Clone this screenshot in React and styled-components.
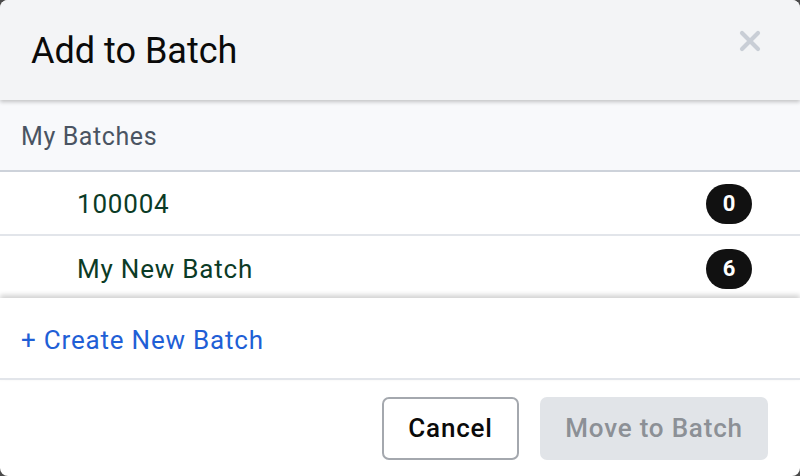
import React from "react";
import styled, { createGlobalStyle } from "styled-components";

const GlobalStyle = createGlobalStyle`
    html, body {
        margin: 0;
        padding: 0;
        background: #4b4b4b;
    }
    body {
        font-family: Roboto, "Liberation Sans", sans-serif;
    }
`;

const Modal = styled.div`
    width: 800px;
    height: 476px;
    background: #ffffff;
    border-radius: 8px;
    overflow: hidden;
    display: flex;
    flex-direction: column;
`;

const Header = styled.div`
    height: 100px;
    box-sizing: border-box;
    padding: 2px 31px 0;
    background: #f3f4f6;
    display: flex;
    align-items: center;
    justify-content: space-between;
    box-shadow: 0 2px 4px rgba(0, 0, 0, 0.22);
    position: relative;
    z-index: 2;
    .title {
        margin: 0;
        font-size: 36px;
        font-weight: 400;
        color: #0a0a0a;
    }
`;

const CloseButton = styled.button`
    border: 0;
    background: none;
    padding: 0;
    margin-right: 8px;
    margin-top: -21px;
    width: 22px;
    height: 22px;
    cursor: pointer;
    svg {
        display: block;
    }
`;

const SectionLabel = styled.div`
    height: 72px;
    box-sizing: border-box;
    padding: 3px 21px 0;
    display: flex;
    align-items: center;
    background: #f8f9fb;
    border-bottom: 2px solid #cdd2da;
    font-size: 25px;
    letter-spacing: 0.6px;
    color: #4a5462;
`;

const List = styled.div`
    height: 126px;
    overflow: hidden;
`;

const Row = styled.div`
    height: 64px;
    box-sizing: border-box;
    padding: 1px 48px 0 77px;
    display: flex;
    align-items: center;
    justify-content: space-between;
    border-bottom: ${(props) => (props.$last ? "none" : "2px solid #e2e5ea")};
    font-size: 26px;
    letter-spacing: 0.8px;
    color: #0b3b26;
`;

const Badge = styled.span`
    min-width: 46px;
    height: 40px;
    box-sizing: border-box;
    border-radius: 20px;
    background: #111111;
    color: #ffffff;
    font-size: 22px;
    font-weight: 700;
    letter-spacing: 0;
    display: flex;
    align-items: center;
    justify-content: center;
`;

const CreateRow = styled.div`
    height: 82px;
    box-sizing: border-box;
    padding: 4px 21px 0;
    display: flex;
    align-items: center;
    border-bottom: 2px solid #e2e5ea;
    box-shadow: 0 -3px 5px rgba(0, 0, 0, 0.18);
    position: relative;
    z-index: 1;
    background: #ffffff;
    a {
        color: #1f5fd6;
        font-size: 26px;
        letter-spacing: 0.8px;
        text-decoration: none;
        cursor: pointer;
    }
`;

const Footer = styled.div`
    flex: 1;
    display: flex;
    align-items: center;
    justify-content: flex-end;
    gap: 21px;
    padding: 0 32px 0 0;
`;

const Button = styled.button`
    height: 63px;
    box-sizing: border-box;
    padding: 0 20px;
    border-radius: 7px;
    font-family: inherit;
    font-size: 26px;
    font-weight: 500;
    letter-spacing: 0.8px;
    border: ${(props) => (props.$disabled ? "0" : "2px solid #a4a8ae")};
    background: ${(props) => (props.$disabled ? "#e1e4e8" : "#ffffff")};
    color: ${(props) => (props.$disabled ? "#8c9096" : "#0a0a0a")};
    min-width: ${(props) => props.$width}px;
`;

const batches = [
    { name: "100004", count: 0 },
    { name: "My New Batch", count: 6 },
];

const App = () => {
    return (
        <>
            <GlobalStyle />
            <Modal>
                <Header>
                    <h1 className="title">Add to Batch</h1>
                    <CloseButton aria-label="Close">
                        <svg width="22" height="22" viewBox="0 0 22 22">
                            <path
                                d="M3 3 L19 19 M19 3 L3 19"
                                stroke="#c9ced6"
                                strokeWidth="4.2"
                                strokeLinecap="round"
                            />
                        </svg>
                    </CloseButton>
                </Header>
                <SectionLabel>My Batches</SectionLabel>
                <List>
                    {batches.map((batch, i) => (
                        <Row key={batch.name} $last={i === batches.length - 1}>
                            <span>{batch.name}</span>
                            <Badge>{batch.count}</Badge>
                        </Row>
                    ))}
                </List>
                <CreateRow>
                    <a>+ Create New Batch</a>
                </CreateRow>
                <Footer>
                    <Button $width={137}>Cancel</Button>
                    <Button $disabled $width={228}>
                        Move to Batch
                    </Button>
                </Footer>
            </Modal>
        </>
    );
};

export default App;
